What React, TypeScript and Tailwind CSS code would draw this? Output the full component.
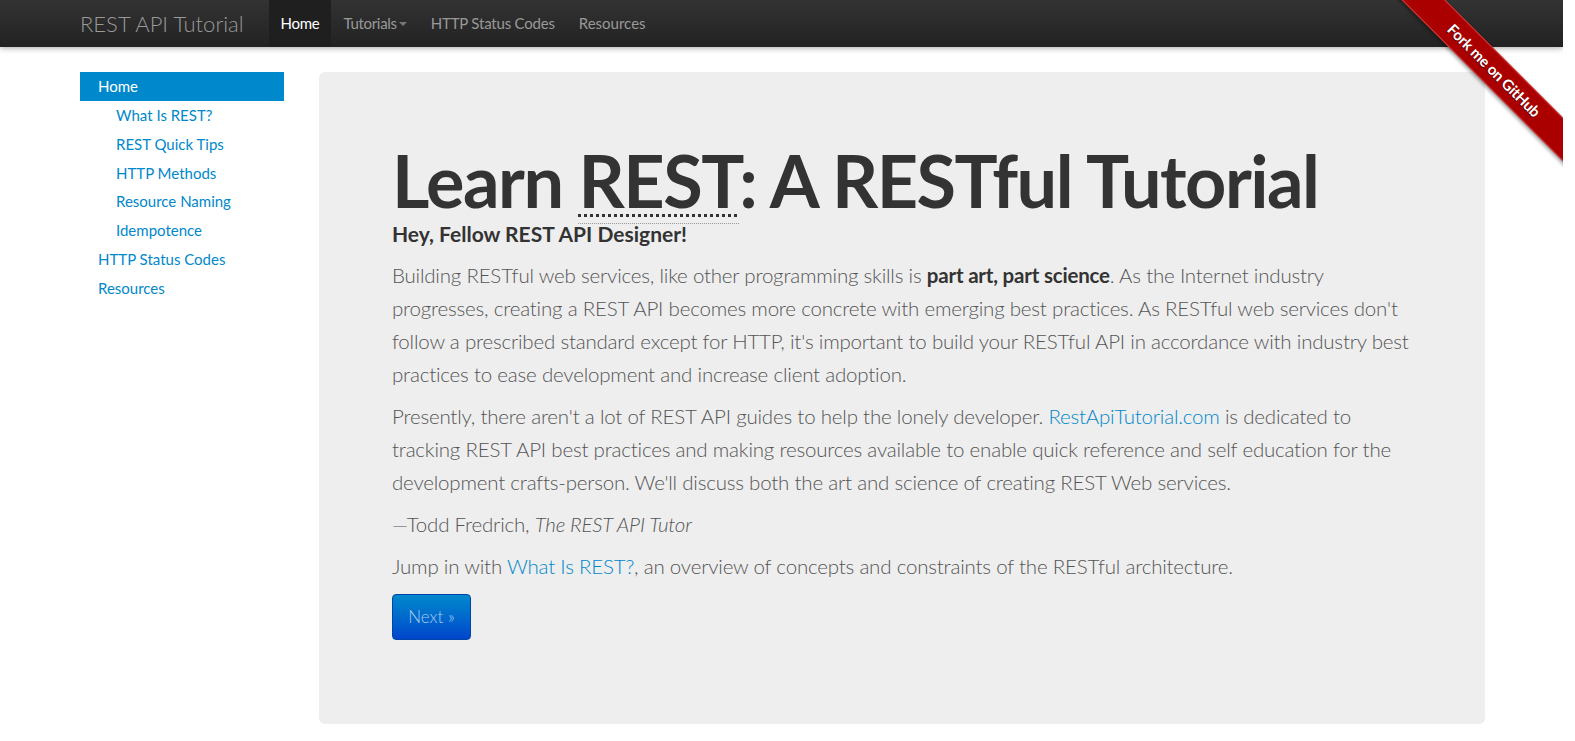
import React from 'react'

const font = { fontFamily: 'Lato, "Open Sans", sans-serif' }

const subLinks = ['What Is REST?', 'REST Quick Tips', 'HTTP Methods', 'Resource Naming', 'Idempotence']

const pCls = 'text-[20.5px] font-light text-[#555555] leading-[33px] tracking-[-0.2px] whitespace-nowrap'

export default function App() {
  return (
    <div className="relative min-h-[741px] bg-white mr-[12px] overflow-hidden" style={font}>
      {/* navbar */}
      <div className="h-[47px] bg-gradient-to-b from-[#333333] to-[#222222] shadow-[0_1px_6px_rgba(0,0,0,0.35)] flex items-stretch pl-[80px]">
        <div className="flex items-center text-[22px] font-light text-[#999999] mr-[25px]">REST API Tutorial</div>
        <div className="flex items-center px-[12px] bg-[#1f1f1f] text-white text-[15px] tracking-[-0.3px]">Home</div>
        <div className="flex items-center px-[12px] text-[#999999] text-[15px] tracking-[-0.3px]">
          Tutorials
          <span className="ml-[2px] mt-[1px] border-l-[4px] border-r-[4px] border-t-[4px] border-l-transparent border-r-transparent border-t-[#777777]" />
        </div>
        <div className="flex items-center px-[12px] text-[#999999] text-[15px] tracking-[-0.2px]">HTTP Status Codes</div>
        <div className="flex items-center px-[12px] text-[#999999] text-[15px]">Resources</div>
      </div>

      {/* fork ribbon */}
      <div className="absolute top-0 right-0 w-[170px] h-[170px] overflow-hidden pointer-events-none">
        <div className="absolute top-[55px] right-[-56px] w-[250px] rotate-45 bg-[#aa0000] border-y border-[#d04040] shadow-[0_2px_4px_rgba(0,0,0,0.4)] text-center text-white text-[15px] font-bold leading-[29px] tracking-[-0.2px] [text-shadow:0_1px_1px_rgba(0,0,0,0.5)]">
          Fork me on GitHub
        </div>
      </div>

      <div className="flex pl-[80px] pr-[78px] pt-[25px] pb-[19px] gap-[35px]">
        {/* sidebar */}
        <div className="w-[204px] shrink-0 text-[15px]">
          <div className="h-[29px] bg-[#0088cc] text-white pl-[18px] flex items-center">Home</div>
          {subLinks.map(l => (
            <div key={l} className="h-[28.75px] pl-[36px] flex items-center text-[#0088cc]">{l}</div>
          ))}
          <div className="h-[28.75px] pl-[18px] flex items-center text-[#0088cc]">HTTP Status Codes</div>
          <div className="h-[28.75px] pl-[18px] flex items-center text-[#0088cc]">Resources</div>
        </div>

        {/* jumbotron */}
        <div className="flex-1 min-w-0 bg-[#eeeeee] rounded-[6px] pl-[73px] pr-[60px] pt-[63px] pb-[84px]">
          <h1 className="text-[72px] font-bold text-[#333333] leading-[90px] tracking-[-1.5px] whitespace-nowrap">
            Learn{' '}
            <span className="underline decoration-dotted decoration-[3px] underline-offset-[6px] border-b border-dotted border-[#999999]">REST</span>
            : A RESTful Tutorial
          </h1>
          <h2 className="text-[21px] font-bold text-[#333333] leading-[22px] mt-[-2px]">Hey, Fellow REST API Designer!</h2>
          <p className={`${pCls} mt-[14px]`}>
            Building RESTful web services, like other programming skills is <strong className="font-bold text-[#333333]">part art, part science</strong>. As the Internet industry<br />
            progresses, creating a REST API becomes more concrete with emerging best practices. As RESTful web services don't<br />
            follow a prescribed standard except for HTTP, it's important to build your RESTful API in accordance with industry best<br />
            practices to ease development and increase client adoption.
          </p>
          <p className={`${pCls} mt-[9px]`}>
            Presently, there aren't a lot of REST API guides to help the lonely developer. <span className="text-[#0088cc]">RestApiTutorial.com</span> is dedicated to<br />
            tracking REST API best practices and making resources available to enable quick reference and self education for the<br />
            development crafts-person. We'll discuss both the art and science of creating REST Web services.
          </p>
          <p className={`${pCls} mt-[9px]`}>
            —Todd Fredrich, <em>The REST API Tutor</em>
          </p>
          <p className={`${pCls} mt-[9px]`}>
            Jump in with <span className="text-[#0088cc]">What Is REST?</span>, an overview of concepts and constraints of the RESTful architecture.
          </p>
          <button className="mt-[11px] w-[79px] h-[46px] rounded-[4px] bg-gradient-to-b from-[#0088cc] to-[#0044cc] border border-[#0044aa] text-[#a6cdf0] text-[17px] font-light">
            Next »
          </button>
        </div>
      </div>
    </div>
  )
}
